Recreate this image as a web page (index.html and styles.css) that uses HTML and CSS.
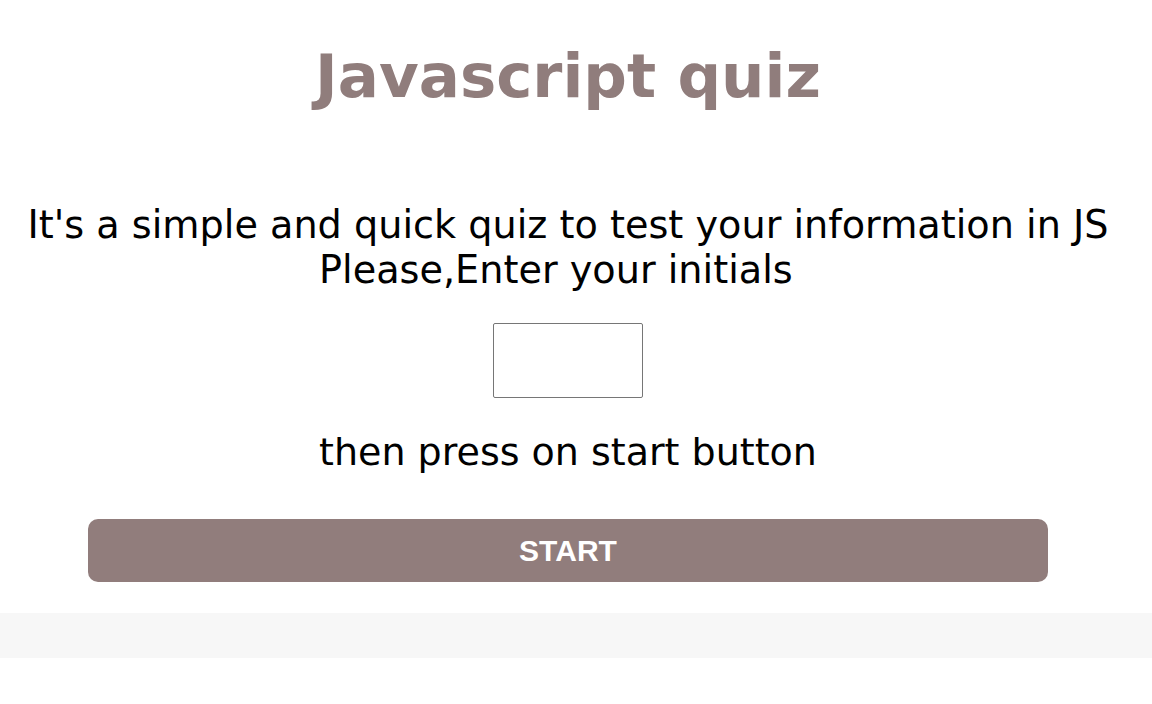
FILE: index.html
```html
<!DOCTYPE html>
<html lang="en">
<head>
<meta charset="utf-8">
<title>Javascript quiz</title>
<link rel="stylesheet" href="styles.css">
</head>
<body>
<div class="page">
  <h1 class="title">Javascript quiz</h1>
  <section class="start">
    <p class="intro">It's a simple and quick quiz to test your information in JS<br>Please,Enter your initials&nbsp;&nbsp;</p>
    <input class="initials" type="text" aria-label="initials">
    <p class="hint">then press on start button</p>
    <button class="start-btn" type="button">START</button>
  </section>
</div>
<div class="band"></div>
</body>
</html>
```
FILE: styles.css
```css
html, body {
  margin: 0;
  padding: 0;
  background: #ffffff;
}
body {
  font-family: "DejaVu Sans", Verdana, sans-serif;
  color: #000;
}
.page {
  width: 1136px;
  display: flex;
  flex-direction: column;
  align-items: center;
}
.title {
  margin: 41px 0 0 0;
  font-size: 61px;
  font-weight: bold;
  line-height: 70px;
  color: #907d7c;
  text-align: center;
}
.start {
  display: flex;
  flex-direction: column;
  align-items: center;
  width: 100%;
}
.intro {
  margin: 92px 0 0 0;
  font-size: 38.2px;
  line-height: 45px;
  text-align: center;
}
.initials {
  margin-top: 30px;
  width: 150px;
  height: 75px;
  box-sizing: border-box;
  border: 1px solid #767676;
  border-radius: 2px;
  padding: 0;
  background: #fff;
}
.hint {
  margin: 32px 0 0 0;
  font-size: 38px;
  line-height: 45px;
  text-align: center;
}
.start-btn {
  margin-top: 44px;
  width: 960px;
  height: 63px;
  border: none;
  border-radius: 10px;
  background: #917d7c;
  color: #fff;
  font-family: "Liberation Sans", Arial, sans-serif;
  font-weight: bold;
  font-size: 30px;
  padding: 0;
}
.band {
  margin-top: 31px;
  height: 45px;
  background: #f7f7f7;
}
```
